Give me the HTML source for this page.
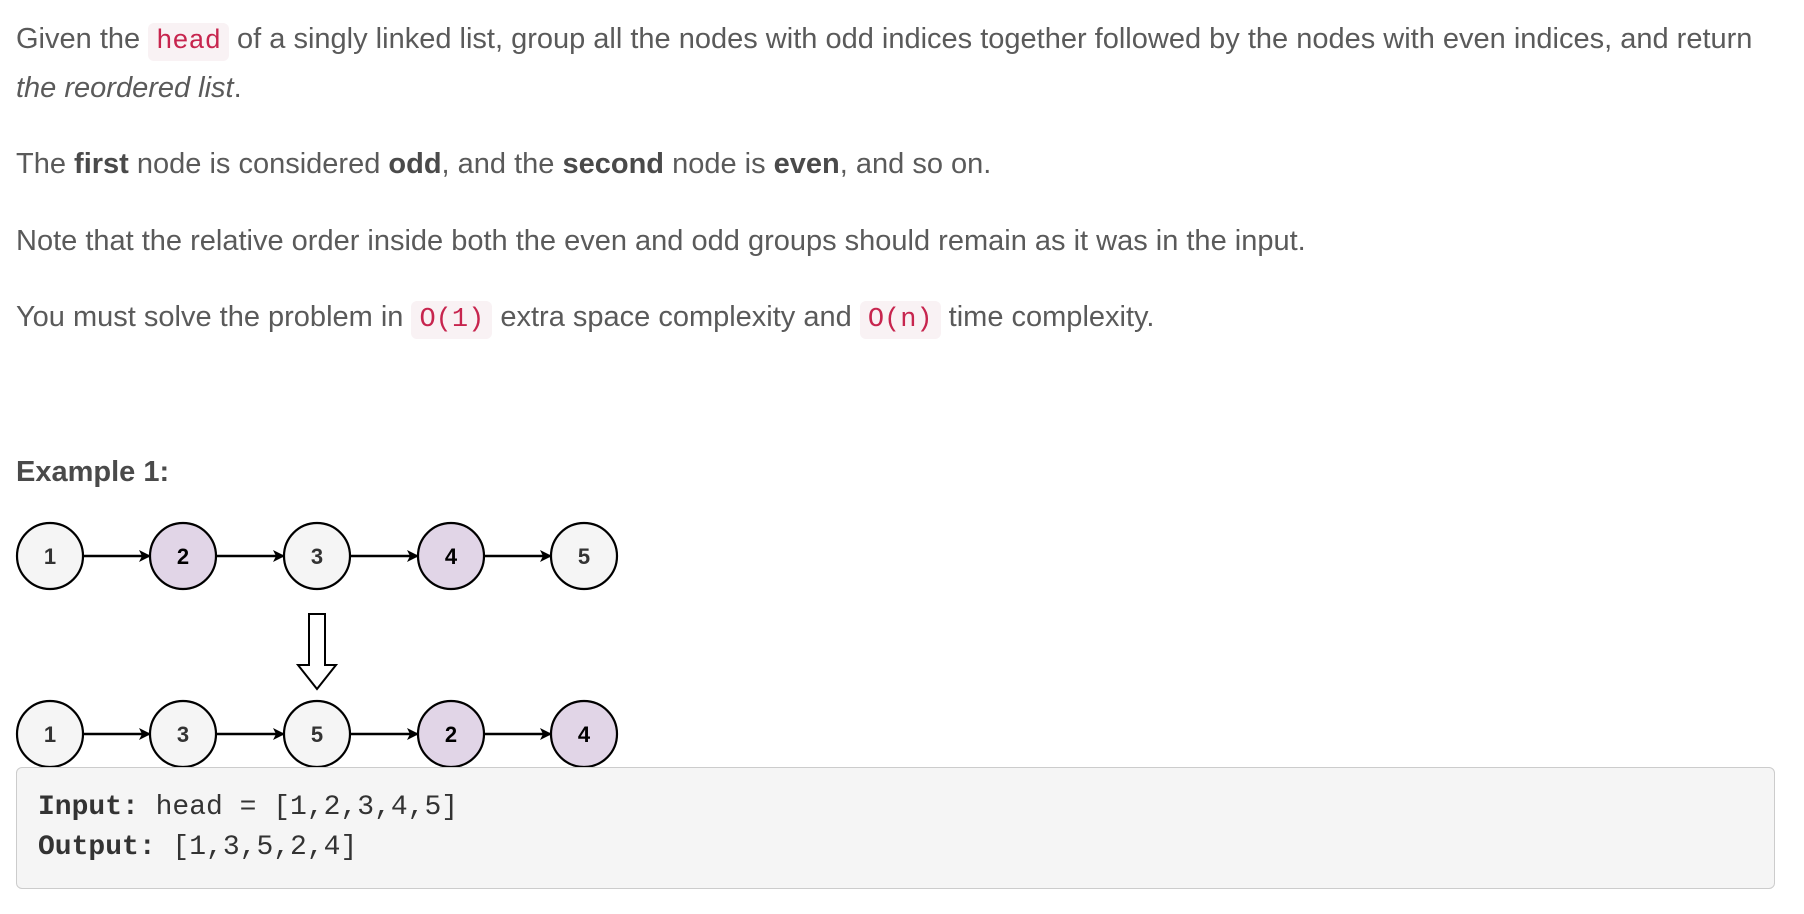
<!DOCTYPE html>
<html><head><meta charset="utf-8"><style>
body{margin:0;background:#fff;width:1804px;height:914px;overflow:hidden;font-family:"Liberation Sans",sans-serif;color:#5a5a5a;font-size:29px;}
.t{position:absolute;left:16px;white-space:nowrap;line-height:30px;}
b{color:#4a4a4a}
code{font-family:"Liberation Mono",monospace;color:#c7254e;background:#f9f2f4;border-radius:6px;padding:4px 8px;font-size:27px;}
.box{position:absolute;left:16px;top:767px;width:1757px;height:120px;background:#f5f5f5;border:1.5px solid #ccc;border-radius:6px;}
.c{position:absolute;left:38px;font-family:"Liberation Mono",monospace;font-size:28px;color:#333;white-space:nowrap;line-height:32px}
.c b{color:#333}
</style></head><body>
<div class="t" style="top:24px">Given the <code>head</code> of a singly linked list, group all the nodes with odd indices together followed by the nodes with even indices, and return</div>
<div class="t" style="top:73px"><i>the reordered list</i>.</div>
<div class="t" style="top:149px">The <b>first</b> node is considered <b>odd</b>, and the <b>second</b> node is <b>even</b>, and so on.</div>
<div class="t" style="top:226px">Note that the relative order inside both the even and odd groups should remain as it was in the input.</div>
<div class="t" style="top:302px">You must solve the problem in <code>O(1)</code> extra space complexity and <code>O(n)</code> time complexity.</div>
<div class="t" style="top:457px"><b>Example 1:</b></div>
<svg style="position:absolute;left:0;top:0" width="700" height="780">
<defs><marker id="a" markerWidth="12" markerHeight="12" refX="11" refY="6" orient="auto" markerUnits="userSpaceOnUse"><path d="M0,0 L12,6 L0,12 L3,6 Z" fill="#000"/></marker></defs>
<g stroke="#000" stroke-width="2.5">
<line x1="83" y1="556" x2="150" y2="556" marker-end="url(#a)"/>
<line x1="216" y1="556" x2="284" y2="556" marker-end="url(#a)"/>
<line x1="350" y1="556" x2="418" y2="556" marker-end="url(#a)"/>
<line x1="484" y1="556" x2="551" y2="556" marker-end="url(#a)"/>
<line x1="83" y1="734" x2="150" y2="734" marker-end="url(#a)"/>
<line x1="216" y1="734" x2="284" y2="734" marker-end="url(#a)"/>
<line x1="350" y1="734" x2="418" y2="734" marker-end="url(#a)"/>
<line x1="484" y1="734" x2="551" y2="734" marker-end="url(#a)"/>
</g>
<g stroke="#000" stroke-width="2.2">
<circle cx="50" cy="556" r="33" fill="#f5f5f5"/><circle cx="183" cy="556" r="33" fill="#e1d5e7"/><circle cx="317" cy="556" r="33" fill="#f5f5f5"/><circle cx="451" cy="556" r="33" fill="#e1d5e7"/><circle cx="584" cy="556" r="33" fill="#f5f5f5"/>
<circle cx="50" cy="734" r="33" fill="#f5f5f5"/><circle cx="183" cy="734" r="33" fill="#f5f5f5"/><circle cx="317" cy="734" r="33" fill="#f5f5f5"/><circle cx="451" cy="734" r="33" fill="#e1d5e7"/><circle cx="584" cy="734" r="33" fill="#e1d5e7"/>
</g>
<g font-family="Liberation Sans,sans-serif" font-size="22" font-weight="bold" text-anchor="middle" fill="#333">
<text x="50" y="564">1</text><text x="183" y="564" fill="#000">2</text><text x="317" y="564">3</text><text x="451" y="564" fill="#000">4</text><text x="584" y="564">5</text>
<text x="50" y="742">1</text><text x="183" y="742">3</text><text x="317" y="742">5</text><text x="451" y="742" fill="#000">2</text><text x="584" y="742" fill="#000">4</text>
</g>
<path d="M309,614 H325 V665 H336 L317,689 L298,665 H309 Z" fill="#fff" stroke="#000" stroke-width="2"/>
</svg>
<div class="box"></div>
<div class="c" style="top:792px"><b>Input:</b> head = [1,2,3,4,5]</div>
<div class="c" style="top:832px"><b>Output:</b> [1,3,5,2,4]</div>
</body></html>
